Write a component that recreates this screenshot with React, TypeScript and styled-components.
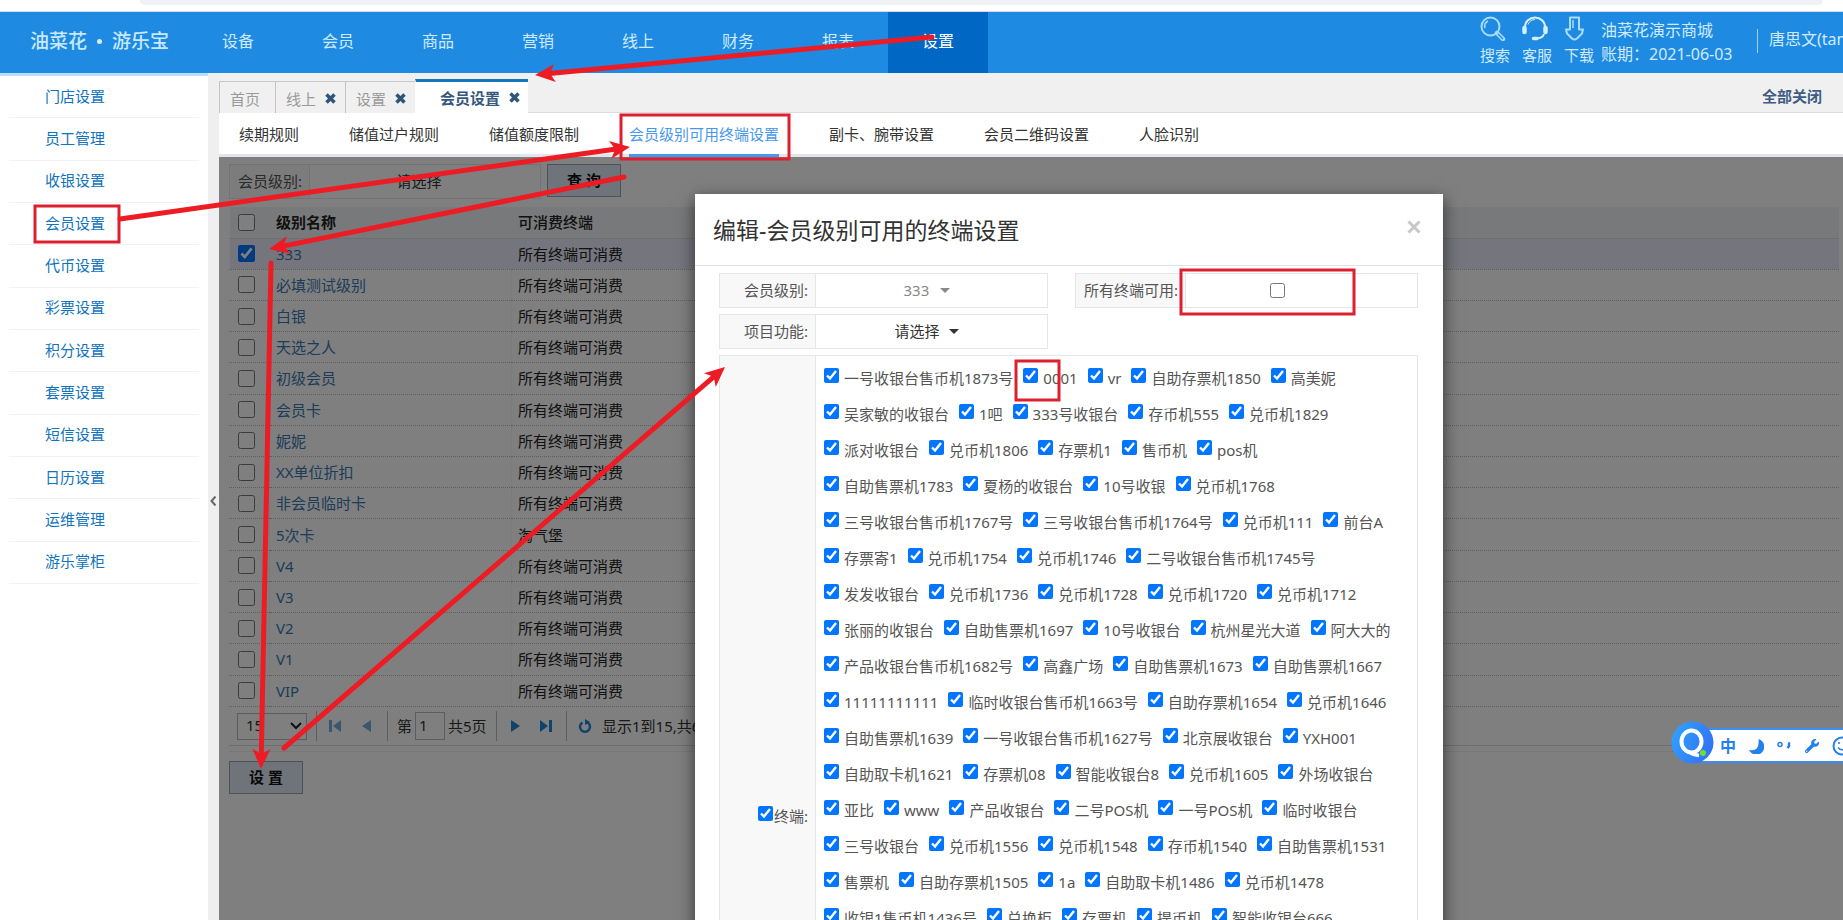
import React from 'react';
import styled, { createGlobalStyle } from 'styled-components';
import { FaWrench } from 'react-icons/fa';

const GlobalStyle = createGlobalStyle`
  *, *::before, *::after { box-sizing: border-box; }
  html, body { margin: 0; height: 100%; overflow: hidden; background: #fff; }
  body, button, input, select {
    font-family: "Noto Sans", "Noto Sans CJK SC", sans-serif;
    font-size: 15px;
  }
  body { color: #333; line-height: 20px; }
  a { text-decoration: none; color: inherit; }
  button { cursor: pointer; }
`;

const Page = styled.div`
  position: relative;
  display: flex;
  flex-direction: column;
  height: 100vh;
  overflow: hidden;
`;

const BrowserEdge = styled.div`
  flex: none;
  height: 12px;
  padding: 0 20px 0 140px;
  border-bottom: 1px solid #d5dae0;
  background: #fff;
  &::before {
    content: "";
    display: block;
    height: 5px;
    border-radius: 0 0 10px 10px;
    background: #eff1f5;
  }
`;

const Header = styled.header`
  flex: none;
  display: flex;
  height: 61px;
  background: #1e8ae2;
  color: #cfeaff;
  overflow: hidden;
`;

const Logo = styled.a`
  flex: none;
  display: flex;
  align-items: center;
  justify-content: space-between;
  width: 188px;
  padding: 0 19px 3px 30px;
  font-size: 19px;
  font-weight: 500;
  color: #c8e8ff;
  white-space: nowrap;
`;

const Dot = styled.span`
  width: 5px;
  height: 5px;
  border-radius: 50%;
  background: #d6eeff;
`;

const MainNav = styled.nav`
  display: flex;
`;

const NavItem = styled.a<{ $active?: boolean }>`
  display: flex;
  align-items: center;
  justify-content: center;
  width: 100px;
  padding-bottom: 3px;
  font-size: 16px;
  color: ${p => (p.$active ? '#fff' : '#cfeaff')};
  background: ${p => (p.$active ? '#0068c4' : 'transparent')};
`;

const HeaderTools = styled.div`
  flex: none;
  display: flex;
  margin-left: auto;
`;

const Tool = styled.a`
  display: flex;
  flex-direction: column;
  width: 42px;
  padding-top: 4px;
  &:nth-child(3) { width: 37px; }
  svg { display: block; margin-bottom: 7px; }
  span { line-height: 15px; white-space: nowrap; }
`;

const Shop = styled.div`
  width: 156px;
  padding-top: 6px;
  font-size: 16px;
  line-height: 24px;
  white-space: nowrap;
`;

const User = styled.a`
  display: block;
  width: 86px;
  height: 24px;
  margin-top: 17px;
  padding-left: 11px;
  border-left: 1px solid #9fd2fb;
  font-size: 16px;
  line-height: 20px;
  overflow: hidden;
  white-space: nowrap;
`;

const Body = styled.div`
  flex: 1;
  display: flex;
  min-height: 0;
`;

const Sidebar = styled.nav`
  flex: none;
  width: 208px;
  padding: 0 9px;
  border-top: 3px solid #b5dffa;
  background: #fff;
`;

const SideList = styled.div`
  display: grid;
  grid-auto-rows: 1fr;
  height: 508px;
`;

const SideItem = styled.a`
  display: flex;
  align-items: center;
  padding: 0 0 2px 36px;
  border-bottom: 1px solid #f2f2f2;
  color: #1273bd;
`;

const Splitter = styled.button`
  flex: none;
  display: flex;
  align-items: center;
  justify-content: center;
  width: 11px;
  padding: 8px 0 0;
  border: 0;
  background: #efefef;
`;

const Main = styled.main`
  flex: 1;
  display: flex;
  flex-direction: column;
  min-width: 0;
`;

const TabBar = styled.div`
  flex: none;
  display: flex;
  align-items: flex-end;
  height: 40px;
  padding-right: 21px;
  border-bottom: 1px solid #dcdcdc;
  background: #f0f0f0;
`;

const Tab = styled.div<{ $w: number; $active?: boolean }>`
  display: flex;
  align-items: center;
  justify-content: space-between;
  width: ${p => p.$w}px;
  height: ${p => (p.$active ? 34 : 32)}px;
  padding: ${p => (p.$active ? '0 8px 0 24px' : '2px 9px 0 10px')};
  margin-bottom: -1px;
  border-left: 1px solid ${p => (p.$active ? '#fff' : '#c4c4c4')};
  border-top: ${p => (p.$active ? '3px solid #1277bd' : '1px solid #c9c9c9')};
  background: ${p => (p.$active ? '#fff' : '#f0f0f0')};
  color: ${p => (p.$active ? '#345880' : '#9a9a9a')};
  font-weight: ${p => (p.$active ? 600 : 400)};
`;

const TabClose = styled.button`
  display: flex;
  padding: 0;
  border: 0;
  background: none;
`;

const CloseAll = styled.button`
  margin: 0 0 6px auto;
  padding: 0;
  border: 0;
  background: none;
  color: #3f5d82;
  font-weight: 600;
`;

const SubTabs = styled.nav`
  flex: none;
  display: flex;
  gap: 50px;
  height: 44px;
  padding-left: 20px;
  background: linear-gradient(#fff 41px, #e3e5e9 41px);
`;

const SubTab = styled.a<{ $active?: boolean }>`
  padding-top: 11px;
  border-bottom: 3px solid ${p => (p.$active ? '#4798ec' : 'transparent')};
  color: ${p => (p.$active ? '#4798ec' : '#333')};
  white-space: nowrap;
`;

const Content = styled.section`
  position: relative;
  flex: 1;
  min-height: 0;
  padding: 7px 4px 0 10px;
  overflow: hidden;
`;

const Filters = styled.form`
  display: flex;
  gap: 6px;
  height: 34px;
  margin-bottom: 9px;
`;

const FieldLabel = styled.label<{ $w: number }>`
  flex: none;
  display: flex;
  align-items: center;
  justify-content: flex-end;
  width: ${p => p.$w}px;
  padding: 0 7px 1px 0;
  border-right: 1px solid #e6e6e6;
  background: #f8f8f8;
  color: #555;
`;

const Field = styled.div<{ $w: number }>`
  display: flex;
  width: ${p => p.$w}px;
  height: 35px;
  border: 1px solid #e6e6e6;
  background: #fff;
`;

const FieldValue = styled.div<{ $shift: number; $dim?: boolean }>`
  flex: 1;
  display: flex;
  align-items: center;
  justify-content: center;
  gap: 9px;
  padding-right: ${p => p.$shift}px;
  color: ${p => (p.$dim ? '#888' : '#333')};
`;

const PlainSelect = styled.select<{ $w: number }>`
  appearance: none;
  width: ${p => p.$w}px;
  height: 30px;
  padding: 0 0 1px;
  border: 0;
  background: transparent;
  color: inherit;
`;

const Caret = styled.i`
  border: 5px solid transparent;
  border-top-color: currentColor;
  border-bottom: 0;
`;

const ActionButton = styled.button`
  width: 74px;
  height: 33px;
  padding: 0 0 2px;
  border: 1px solid #9aa3b0;
  background: #dfe9f5;
  color: #111;
  font-weight: 600;
`;

const Check = styled.input<{ $size?: number }>`
  flex: none;
  display: block;
  width: ${p => p.$size || 15}px;
  height: ${p => p.$size || 15}px;
  margin: 0;
`;

const Grid = styled.table`
  width: 100%;
  height: 500px;
  border-collapse: collapse;
  table-layout: fixed;
  th, td {
    padding: 0 0 0 6px;
    text-align: left;
    vertical-align: middle;
    border-left: 1px dotted #eee;
    border-bottom: 1px dotted #bbb;
    color: #222;
    line-height: 18px;
  }
  th:first-child, td:first-child { padding-left: 8px; border-left-color: transparent; }
  th { height: 31px; background: #f0f3f5; font-weight: 500; border-bottom: 1px solid #ddd; }
  th:nth-child(2) { font-weight: 600; }
`;

const CheckCol = styled.col`
  width: 40px;
`;

const NameCol = styled.col`
  width: 242px;
`;

const Row = styled.tr<{ $selected?: boolean }>`
  background: ${p => (p.$selected ? '#eaeafa' : 'transparent')};
  a { color: #3a78b0; }
`;

const Pager = styled.div`
  display: flex;
  align-items: center;
  height: 39px;
  padding-left: 8px;
  border-bottom: 1px solid #ddd;
  color: #333;
  white-space: nowrap;
  overflow: hidden;
`;

const PageSize = styled.div`
  position: relative;
  width: 70px;
  margin-right: 9px;
  select {
    appearance: none;
    display: block;
    width: 100%;
    height: 27px;
    padding: 0 0 2px 8px;
    border: 1px solid #bbb;
    background: #fff;
    color: #333;
  }
  svg { position: absolute; right: 5px; top: 9px; pointer-events: none; }
`;

const PagerGroup = styled.div<{ $w: number; $buttons?: boolean }>`
  display: flex;
  align-items: center;
  gap: 3px;
  width: ${p => p.$w}px;
  height: 30px;
  padding-left: ${p => (p.$buttons ? 4 : 9)}px;
  border-left: 1px solid #bbb;
`;

const PagerButton = styled.button`
  display: flex;
  justify-content: center;
  width: 28px;
  padding: 0;
  border: 0;
  background: none;
`;

const PageInput = styled.input`
  width: 30px;
  height: 28px;
  padding: 0 0 2px 3px;
  border: 1px solid #bbb;
  color: #333;
`;

const Divider = styled.div`
  margin-bottom: 9px;
  height: 6px;
  border-bottom: 1px solid #eee;
`;

const Backdrop = styled.div`
  position: absolute;
  inset: 0;
  background: rgba(0, 0, 0, 0.5);
`;

const Dialog = styled.div`
  position: absolute;
  left: 476px;
  top: 37px;
  width: 748px;
  background: #fff;
  box-shadow: 0 5px 16px rgba(0, 0, 0, 0.6);
`;

const DialogHead = styled.div`
  display: flex;
  justify-content: space-between;
  height: 72px;
  padding: 20px 22px 0 18px;
  border-bottom: 1px solid #e3e3e3;
  h2 { margin: 0; font-size: 23px; line-height: 32px; font-weight: 400; color: #333; }
`;

const DialogClose = styled.button`
  height: 14px;
  margin-top: 4px;
  padding: 0;
  border: 0;
  background: none;
`;

const DialogBody = styled.div`
  display: grid;
  gap: 6px;
  padding: 7px 25px 20px 24px;
`;

const FieldRow = styled.div`
  display: flex;
  justify-content: space-between;
`;

const TerminalBox = styled.div`
  display: flex;
  min-height: 922px;
  border: 1px solid #e6e6e6;
`;

const TerminalList = styled.div`
  flex: 1;
  padding: 5px 0 5px 8px;
  background: #fff;
`;

const TerminalRow = styled.div`
  display: flex;
  gap: 10px;
  height: 36px;
`;

const Terminal = styled.label`
  display: flex;
  gap: 5px;
  color: #555;
  line-height: 34px;
  white-space: nowrap;
  input { margin-top: 7px; }
`;

const AllTerminals = styled.label`
  display: flex;
  gap: 1px;
`;

const ImeBar = styled.div`
  position: absolute;
  right: 0;
  top: 721px;
  display: flex;
  align-items: center;
  height: 43px;
`;

const ImeLogo = styled.div`
  position: relative;
  flex: none;
  width: 43px;
  height: 43px;
`;

const ImeStrip = styled.div`
  display: flex;
  align-items: center;
  gap: 12px;
  width: 150px;
  height: 35px;
  margin: 6px 0 0 -21px;
  padding-left: 27px;
  border-top: 2px solid #3c8df0;
  border-bottom: 2px solid #3c8df0;
  background: #fff;
  color: #2380ef;
  overflow: hidden;
  svg, b { flex: none; width: 16px; }
  svg:last-child { width: 20px; }
  b { line-height: 20px; font-size: 16px; }
`;

const Annotations = styled.svg`
  position: absolute;
  left: 0;
  top: 0;
  pointer-events: none;
`;

const navItems = ['设备', '会员', '商品', '营销', '线上', '财务', '报表', '设置'];
const sideItems = ['门店设置', '员工管理', '收银设置', '会员设置', '代币设置', '彩票设置', '积分设置', '套票设置', '短信设置', '日历设置', '运维管理', '游乐掌柜'];
const tabs = [
  { name: '首页', width: 56, closable: false },
  { name: '线上', width: 70, closable: true },
  { name: '设置', width: 70, closable: true },
  { name: '会员设置', width: 113, closable: true },
];
const subTabs = ['续期规则', '储值过户规则', '储值额度限制', '会员级别可用终端设置', '副卡、腕带设置', '会员二维码设置', '人脸识别'];
const levels = ['333', '必填测试级别', '白银', '天选之人', '初级会员', '会员卡', '妮妮', 'XX单位折扣', '非会员临时卡', '5次卡', 'V4', 'V3', 'V2', 'V1', 'VIP'];
const terminals = [
  ['一号收银台售币机1873号', '0001', 'vr', '自助存票机1850', '高美妮'],
  ['吴家敏的收银台', '1吧', '333号收银台', '存币机555', '兑币机1829'],
  ['派对收银台', '兑币机1806', '存票机1', '售币机', 'pos机'],
  ['自助售票机1783', '夏杨的收银台', '10号收银', '兑币机1768'],
  ['三号收银台售币机1767号', '三号收银台售币机1764号', '兑币机111', '前台A'],
  ['存票寄1', '兑币机1754', '兑币机1746', '二号收银台售币机1745号'],
  ['发发收银台', '兑币机1736', '兑币机1728', '兑币机1720', '兑币机1712'],
  ['张丽的收银台', '自助售票机1697', '10号收银台', '杭州星光大道', '阿大大的'],
  ['产品收银台售币机1682号', '高鑫广场', '自助售票机1673', '自助售票机1667'],
  ['11111111111', '临时收银台售币机1663号', '自助存票机1654', '兑币机1646'],
  ['自助售票机1639', '一号收银台售币机1627号', '北京展收银台', 'YXH001'],
  ['自助取卡机1621', '存票机08', '智能收银台8', '兑币机1605', '外场收银台'],
  ['亚比', 'www', '产品收银台', '二号POS机', '一号POS机', '临时收银台'],
  ['三号收银台', '兑币机1556', '兑币机1548', '存币机1540', '自助售票机1531'],
  ['售票机', '自助存票机1505', '1a', '自助取卡机1486', '兑币机1478'],
  ['收银1售币机1436号', '兑换柜', '存票机', '提币机', '智能收银台666'],
];

/* Arrow with a notched head; x1,y1 is the tail and x2,y2 the tip. */
function Arrow({ x1, y1, x2, y2 }: { x1: number; y1: number; x2: number; y2: number }) {
  const length = Math.hypot(x2 - x1, y2 - y1);
  const angle = (Math.atan2(y2 - y1, x2 - x1) * 180) / Math.PI;
  return (
    <g transform={`translate(${x1} ${y1}) rotate(${angle})`} fill="#ed1c24">
      <line x1={0} y1={0} x2={length - 12} y2={0} stroke="#ed1c24" strokeWidth={5} strokeLinecap="round" />
      <path d={`M${length} 0 L${length - 20} -9 L${length - 15} 0 L${length - 20} 9 Z`} />
    </g>
  );
}

const frames = [
  [35, 206, 84, 36],
  [621, 115, 168, 44],
  [1181, 270, 173, 44],
  [1016, 361, 43, 39],
];

export default function App() {
  return (
    <Page>
      <GlobalStyle />
      <BrowserEdge />
      <Header>
        <Logo href="#">
          <span>油菜花</span>
          <Dot />
          <span>游乐宝</span>
        </Logo>
        <MainNav>
          {navItems.map(n => (
            <NavItem key={n} href="#" $active={n === '设置'}>{n}</NavItem>
          ))}
        </MainNav>
        <HeaderTools>
          <Tool href="#">
            <svg width="26" height="25" viewBox="0 0 26 25" fill="none" stroke="#a9dcff" strokeWidth="2">
              <circle cx="10.500" cy="10.500" r="9" />
              <path d="M5 12a6 6 0 0 1 3-7" strokeWidth="1.500" />
              <path d="M17 17l6 6" strokeWidth="4.500" strokeLinecap="round" />
              <path d="M18 18l5 5" stroke="#1e8ae2" strokeWidth="1.200" />
            </svg>
            <span>搜索</span>
          </Tool>
          <Tool href="#">
            <svg width="26" height="25" viewBox="0 0 26 25" fill="none" stroke="#d6efff" strokeWidth="2">
              <path d="M3 11a10 9.500 0 0 1 20 0" />
              <path d="M6 8.500a8 8 0 0 1 7-5" strokeWidth="1" />
              <path d="M2.500 12v4" strokeWidth="4.500" strokeLinecap="round" />
              <path d="M23.500 12v4" strokeWidth="4.500" strokeLinecap="round" />
              <path d="M22 18c-1 3-4 4.500-8 4.500" />
              <path d="M11.500 22.500h3.500" strokeWidth="3.500" strokeLinecap="round" />
            </svg>
            <span>客服</span>
          </Tool>
          <Tool href="#">
            <svg width="21" height="25" viewBox="0 0 21 25" fill="none" stroke="#a9dcff" strokeWidth="2" strokeLinejoin="round">
              <path d="M6 1.500h9v12h4l-1 4-5 5q-2.500 2-5 0l-5-5-1-4h4z" />
              <path d="M9 4v8" strokeWidth="1.500" />
            </svg>
            <span>下载</span>
          </Tool>
          <Shop>
            油菜花演示商城
            <br />
            账期：2021-06-03
          </Shop>
          <User href="#">唐思文(tangsiwen)</User>
        </HeaderTools>
      </Header>
      <Body>
        <Sidebar>
          <SideList>
            {sideItems.map(s => <SideItem key={s} href="#">{s}</SideItem>)}
          </SideList>
        </Sidebar>
        <Splitter aria-label="收起菜单">
          <svg width="7" height="10" viewBox="0 0 7 10" fill="none" stroke="#666" strokeWidth="2">
            <path d="M5.500 0.500L1.500 5l4 4.500" />
          </svg>
        </Splitter>
        <Main>
          <TabBar>
            {tabs.map(t => (
              <Tab key={t.name} $w={t.width} $active={t.name === '会员设置'}>
                {t.name}
                {t.closable && (
                  <TabClose aria-label={`关闭${t.name}`}>
                    <svg width="11" height="11" viewBox="0 0 11 11" stroke="#2c5578" strokeWidth="3.500">
                      <path d="M1.500 1.500l8 8M9.500 1.500l-8 8" />
                    </svg>
                  </TabClose>
                )}
              </Tab>
            ))}
            <CloseAll>全部关闭</CloseAll>
          </TabBar>
          <SubTabs>
            {subTabs.map((s, i) => <SubTab key={s} href="#" $active={i === 3}>{s}</SubTab>)}
          </SubTabs>
          <Content>
            <Filters onSubmit={e => e.preventDefault()}>
              <Field $w={312}>
                <FieldLabel $w={80} htmlFor="filter-level">会员级别:</FieldLabel>
                <FieldValue $shift={12}>
                  <PlainSelect id="filter-level" $w={45}><option>请选择</option></PlainSelect>
                </FieldValue>
              </Field>
              <ActionButton>查 询</ActionButton>
            </Filters>
            <Grid>
              <colgroup>
                <CheckCol />
                <NameCol />
                <col />
              </colgroup>
              <thead>
                <tr>
                  <th><Check type="checkbox" $size={17} aria-label="全选" /></th>
                  <th>级别名称</th>
                  <th>可消费终端</th>
                </tr>
              </thead>
              <tbody>
                {levels.map((l, i) => (
                  <Row key={l} $selected={i === 0}>
                    <td><Check type="checkbox" $size={17} defaultChecked={i === 0} aria-label={l} /></td>
                    <td><a href="#">{l}</a></td>
                    <td>{l === '5次卡' ? '淘气堡' : '所有终端可消费'}</td>
                  </Row>
                ))}
              </tbody>
            </Grid>
            <Pager>
              <PageSize>
                <select aria-label="每页条数"><option>15</option></select>
                <svg width="12" height="8" viewBox="0 0 12 8" fill="none" stroke="#222" strokeWidth="2"><path d="M1 1l5 5 5-5" /></svg>
              </PageSize>
              <PagerGroup $w={71} $buttons>
                <PagerButton aria-label="首页">
                  <svg width="12" height="12" fill="#6fb1de"><path d="M0 0h3v12H0zM12 0v12L4 6z" /></svg>
                </PagerButton>
                <PagerButton aria-label="上一页">
                  <svg width="9" height="12" fill="#6fb1de"><path d="M9 0v12L0 6z" /></svg>
                </PagerButton>
              </PagerGroup>
              <PagerGroup $w={109}>
                <label htmlFor="page-no">第</label>
                <PageInput id="page-no" defaultValue="1" />
                <span>共5页</span>
              </PagerGroup>
              <PagerGroup $w={70} $buttons>
                <PagerButton aria-label="下一页">
                  <svg width="9" height="12" fill="#2187d8"><path d="M0 0v12L9 6z" /></svg>
                </PagerButton>
                <PagerButton aria-label="末页">
                  <svg width="12" height="12" fill="#2187d8"><path d="M9 0h3v12H9zM0 0v12L8 6z" /></svg>
                </PagerButton>
              </PagerGroup>
              <PagerGroup $w={200} $buttons>
                <PagerButton aria-label="刷新">
                  <svg width="14" height="15" viewBox="0 0 14 15" fill="none" stroke="#2187d8" strokeWidth="2.500">
                    <path d="M9.500 3.500a5 5 0 1 1-5 0" />
                    <path d="M7 0l5 3-5 3z" fill="#2187d8" stroke="none" />
                  </svg>
                </PagerButton>
                <span>显示1到15,共61条</span>
              </PagerGroup>
            </Pager>
            <Divider />
            <ActionButton>设 置</ActionButton>
            <Backdrop />
            <Dialog role="dialog" aria-labelledby="dialog-title">
              <DialogHead>
                <h2 id="dialog-title">编辑-会员级别可用的终端设置</h2>
                <DialogClose aria-label="关闭">
                  <svg width="14" height="14" viewBox="0 0 14 14" stroke="#c8c8c8" strokeWidth="3"><path d="M1.500 1.500l11 11M12.500 1.500l-11 11" /></svg>
                </DialogClose>
              </DialogHead>
              <DialogBody>
                <FieldRow>
                  <Field $w={329}>
                    <FieldLabel $w={96} htmlFor="level">会员级别:</FieldLabel>
                    <FieldValue $shift={10} $dim>
                      <PlainSelect id="level" $w={27}><option>333</option></PlainSelect>
                      <Caret />
                    </FieldValue>
                  </Field>
                  <Field $w={343}>
                    <FieldLabel $w={110} htmlFor="all-available">所有终端可用:</FieldLabel>
                    <FieldValue $shift={48}>
                      <Check type="checkbox" id="all-available" />
                    </FieldValue>
                  </Field>
                </FieldRow>
                <FieldRow>
                  <Field $w={329}>
                    <FieldLabel $w={96} htmlFor="feature">项目功能:</FieldLabel>
                    <FieldValue $shift={10}>
                      <PlainSelect id="feature" $w={45}><option>请选择</option></PlainSelect>
                      <Caret />
                    </FieldValue>
                  </Field>
                </FieldRow>
                <TerminalBox>
                  <FieldLabel as="div" $w={96}>
                    <AllTerminals>
                      <Check type="checkbox" defaultChecked />
                      终端:
                    </AllTerminals>
                  </FieldLabel>
                  <TerminalList>
                    {terminals.map((row, i) => (
                      <TerminalRow key={i}>
                        {row.map(t => (
                          <Terminal key={t}>
                            <Check type="checkbox" defaultChecked />
                            {t}
                          </Terminal>
                        ))}
                      </TerminalRow>
                    ))}
                  </TerminalList>
                </TerminalBox>
              </DialogBody>
            </Dialog>
          </Content>
        </Main>
      </Body>
      <ImeBar>
        <ImeLogo>
          <svg width="43" height="43" viewBox="0 0 43 43">
            <defs>
              <linearGradient id="ime" x1="0" y1="0.300" x2="1" y2="0.700">
                <stop offset="0" stopColor="#2fa0ff" />
                <stop offset="1" stopColor="#3370f4" />
              </linearGradient>
            </defs>
            <circle cx="21.500" cy="21.500" r="21" fill="url(#ime)" />
            <ellipse cx="20.500" cy="20.500" rx="10" ry="11" fill="none" stroke="#fff" strokeWidth="4" />
            <path d="M16 30q6 4 12 4.500" fill="none" stroke="#fff" strokeWidth="3.500" />
            <circle cx="32" cy="32" r="3" fill="#6fe02b" />
          </svg>
        </ImeLogo>
        <ImeStrip>
          <b>中</b>
          <svg width="16" height="16" viewBox="0 0 16 16" fill="#2380ef">
            <path d="M10.500 1a8 8 0 1 1-9.500 11q7 1.500 9-4 1-3.500 0.500-7z" />
          </svg>
          <svg width="16" height="16" viewBox="0 0 16 16" fill="none" stroke="#2380ef">
            <circle cx="4" cy="6.500" r="2" strokeWidth="1.500" />
            <path d="M12 5.500h1v2.500l-1.500 2" strokeWidth="2.500" />
          </svg>
          <FaWrench size={14} />
          <svg width="20" height="20" viewBox="0 0 20 20" fill="none" stroke="#2380ef" strokeWidth="2">
            <circle cx="10" cy="10" r="8.500" />
            <path d="M6 11.500q4 4.500 8 0M7 6v2M13 6v2" strokeWidth="1.500" />
          </svg>
        </ImeStrip>
      </ImeBar>
      <Annotations width="100%" height="100%" aria-hidden="true">
        {frames.map(([x, y, w, h]) => (
          <rect key={x} x={x} y={y} width={w} height={h} fill="none" stroke="#dc2030" strokeWidth={3} />
        ))}
        <Arrow x1={932} y1={37} x2={535} y2={75} />
        <Arrow x1={120} y1={219} x2={630} y2={147} />
        <Arrow x1={624} y1={177} x2={269} y2={249} />
        <Arrow x1={271} y1={263} x2={261} y2={769} />
        <Arrow x1={284} y1={748} x2={725} y2={367} />
      </Annotations>
    </Page>
  );
}
